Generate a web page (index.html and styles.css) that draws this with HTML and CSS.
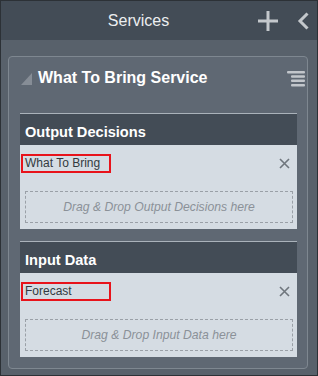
FILE: index.html
```html
<!DOCTYPE html>
<html lang="en">
<head>
    <meta charset="UTF-8">
    <meta name="viewport" content="width=device-width, initial-scale=1.0">
    <title>Services</title>
    <link rel="stylesheet" href="styles.css">
</head>
<body>
    <div class="frame">
        <header class="topbar">
            <h1 class="topbar-title">Services</h1>
            <button class="icon-btn plus" title="Add">
                <svg width="20" height="20" viewBox="0 0 20 20"><path d="M10 0V20M0 10H20" stroke="#c4c8cc" stroke-width="3" fill="none"/></svg>
            </button>
            <button class="icon-btn back" title="Back">
                <svg width="12" height="18" viewBox="0 0 12 18"><path d="M10.5 1.5L3 9l7.5 7.5" stroke="#c4c8cc" stroke-width="3" fill="none"/></svg>
            </button>
        </header>

        <div class="content">
            <section class="panel">
                <div class="panel-head">
                    <svg class="collapse" width="11" height="12" viewBox="0 0 11 12"><polygon points="11,0 11,12 0,12" fill="#868d96"/></svg>
                    <h2 class="panel-title">What To Bring Service</h2>
                    <svg class="menu" width="18" height="16" viewBox="0 0 18 16">
                        <rect x="0" y="0" width="18" height="2.5" rx="1" fill="#c2c6cb"/>
                        <rect x="4" y="4.3" width="14" height="2.5" rx="1" fill="#c2c6cb"/>
                        <rect x="4" y="8.6" width="14" height="2.5" rx="1" fill="#c2c6cb"/>
                        <rect x="4" y="13" width="14" height="2.5" rx="1" fill="#c2c6cb"/>
                    </svg>
                </div>

                <div class="cards">
                    <div class="card">
                        <div class="card-head">Output Decisions</div>
                        <div class="card-body">
                            <div class="item">
                                <span class="item-name">What To Bring</span>
                                <svg class="remove" width="11" height="11" viewBox="0 0 11 11"><path d="M1 1l9 9M10 1l-9 9" stroke="#6f767d" stroke-width="1.6" fill="none"/></svg>
                            </div>
                            <div class="dropzone">Drag &amp; Drop Output Decisions here</div>
                        </div>
                    </div>

                    <div class="card">
                        <div class="card-head">Input Data</div>
                        <div class="card-body">
                            <div class="item">
                                <span class="item-name">Forecast</span>
                                <svg class="remove" width="11" height="11" viewBox="0 0 11 11"><path d="M1 1l9 9M10 1l-9 9" stroke="#6f767d" stroke-width="1.6" fill="none"/></svg>
                            </div>
                            <div class="dropzone">Drag &amp; Drop Input Data here</div>
                        </div>
                    </div>
                </div>
            </section>
        </div>
    </div>
</body>
</html>
```

FILE: styles.css
```css
* {
    box-sizing: border-box;
}

body {
    margin: 0;
    font-family: 'Liberation Sans', Arial, sans-serif;
}

.frame {
    width: 318px;
    height: 376px;
    border: 1px solid #2c3136;
    background: #58616b;
    display: flex;
    flex-direction: column;
}

.topbar {
    height: 39px;
    background: #434c56;
    display: flex;
    align-items: center;
    padding-right: 8px;
}

.topbar-title {
    flex: 1;
    margin: 0;
    padding-left: 18px;
    text-align: center;
    font-size: 16px;
    font-weight: normal;
    color: #eceef0;
}

.icon-btn {
    border: none;
    background: transparent;
    padding: 0;
    display: flex;
    cursor: pointer;
}

.back {
    margin-left: 19px;
}

.content {
    flex: 1;
    padding: 16px 9px 6px 7px;
    display: flex;
}

.panel {
    flex: 1;
    border: 1px solid #7e8790;
    border-radius: 4px;
    background: #5f6873;
}

.panel-head {
    height: 42px;
    display: flex;
    align-items: center;
    padding: 0 2px 0 12px;
}

.collapse {
    margin-top: 1px;
}

.panel-title {
    flex: 1;
    margin: 0 0 0 6px;
    font-size: 16px;
    font-weight: bold;
    color: #ffffff;
}

.menu {
    margin-top: 2px;
}

.cards {
    display: flex;
    flex-direction: column;
    gap: 12px;
    padding: 14px 10px 0 11px;
}

.card {
    background: #d5dce3;
    border-top: 1px solid #aab2ba;
}

.card-head {
    height: 31px;
    background: #434c56;
    display: flex;
    align-items: center;
    padding: 5px 0 0 5px;
    font-size: 14.6px;
    font-weight: bold;
    color: #ffffff;
}

.card-body {
    padding: 9px 7px 6px 5px;
}

.item {
    display: flex;
    align-items: center;
    justify-content: space-between;
    margin-left: -4px;
}

.item-name {
    width: 90px;
    height: 19px;
    border: 2px solid #e8131b;
    padding-left: 2px;
    font-size: 12px;
    line-height: 15px;
    color: #333a40;
}

.dropzone {
    margin: 18px -3px 0 0;
    height: 32px;
    border: 1px dashed #9aa0a7;
    display: flex;
    align-items: center;
    justify-content: center;
    font-size: 12.2px;
    font-style: italic;
    color: #8b9198;
}
```
